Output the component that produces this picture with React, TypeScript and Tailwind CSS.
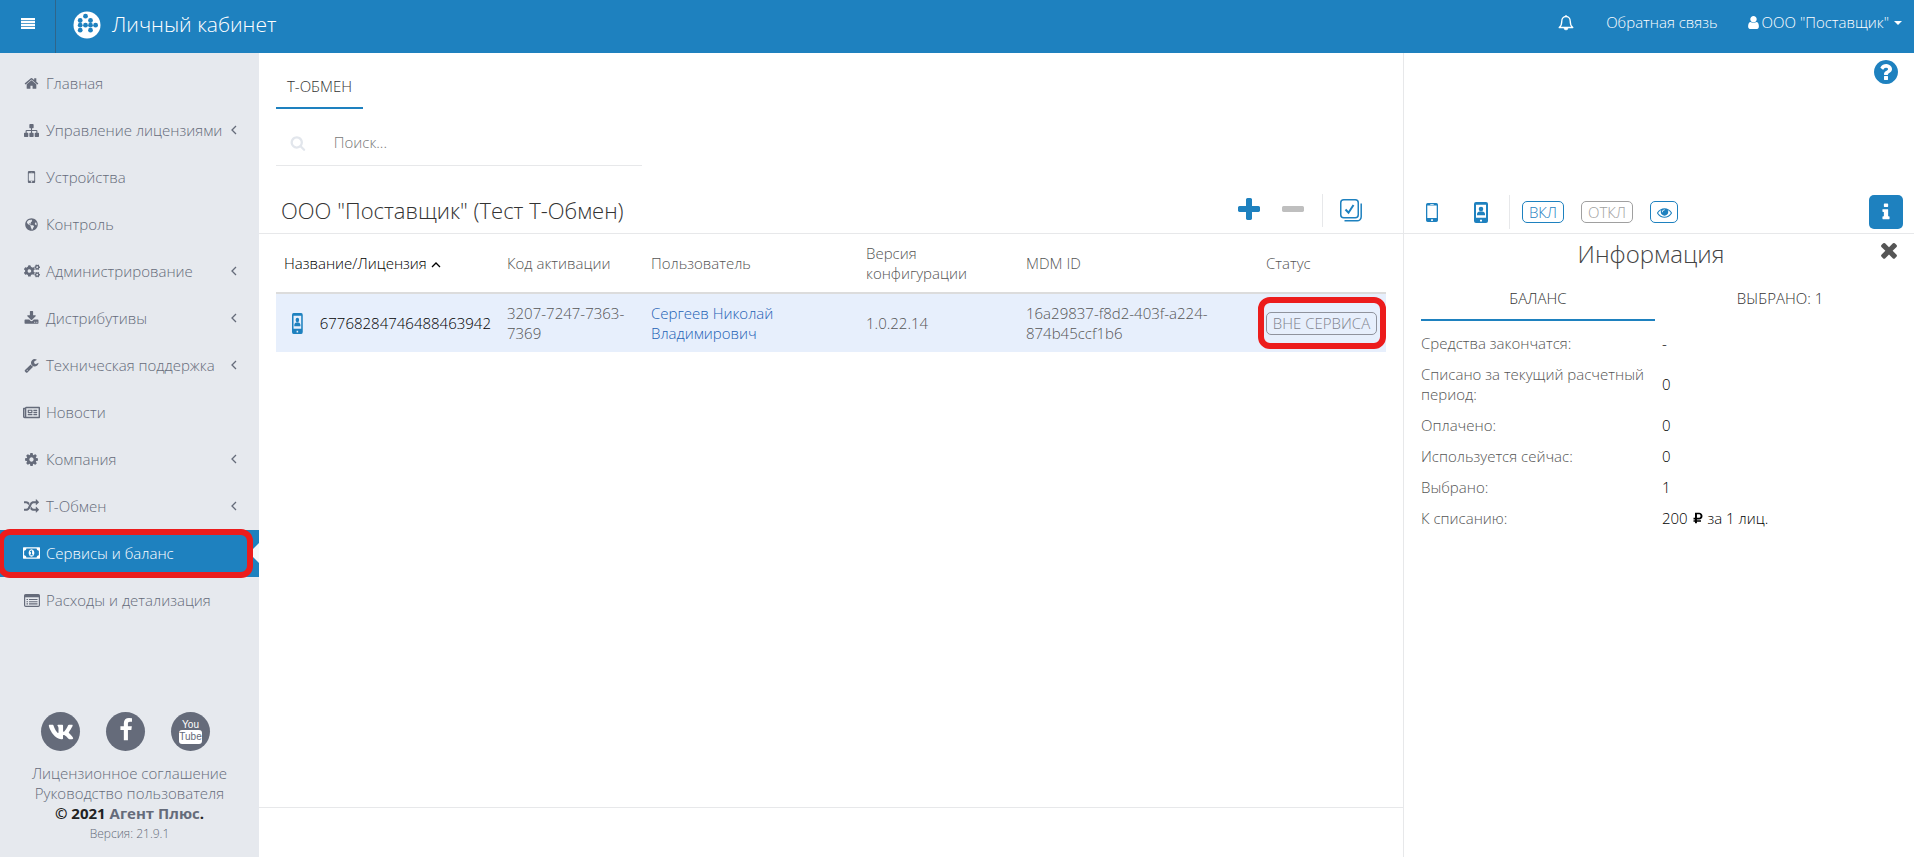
import { useState } from 'react'
import type { ReactNode } from 'react'
import { FaCogs, FaGlobeAmericas, FaRegNewspaper, FaRubleSign, FaVk } from 'react-icons/fa'

const icons = {
  home: 'M1472 992v480q0 26-19 45t-45 19h-384v-384h-256v384h-384q-26 0-45-19t-19-45v-480q0-1 .5-3t.5-3l575-474 575 474q1 2 1 6zm223-69l-62 74q-8 9-21 11h-3q-13 0-21-7l-692-577-692 577q-12 8-24 7-13-2-21-11l-62-74q-8-10-7-23.5t11-21.5l719-599q32-26 76-26t76 26l244 204v-195q0-14 9-23t23-9h192q14 0 23 9t9 23v408l219 182q10 8 11 21.5t-7 23.5z',
  sitemap: 'M1792 1248v320q0 40-28 68t-68 28h-320q-40 0-68-28t-28-68v-320q0-40 28-68t68-28h96v-192h-512v192h96q40 0 68 28t28 68v320q0 40-28 68t-68 28h-320q-40 0-68-28t-28-68v-320q0-40 28-68t68-28h96v-192h-512v192h96q40 0 68 28t28 68v320q0 40-28 68t-68 28h-320q-40 0-68-28t-28-68v-320q0-40 28-68t68-28h96v-192q0-52 38-90t90-38h512v-192h-96q-40 0-68-28t-28-68v-320q0-40 28-68t68-28h320q40 0 68 28t28 68v320q0 40-28 68t-68 28h-96v192h512q52 0 90 38t38 90v192h96q40 0 68 28t28 68z',
  mobile: 'M976 1408q0-33-23.5-56.5t-56.5-23.5-56.5 23.5-23.5 56.5 23.5 56.5 56.5 23.5 56.5-23.5 23.5-56.5zm208-160v-704q0-13-9.5-22.5t-22.5-9.5h-512q-13 0-22.5 9.5t-9.5 22.5v704q0 13 9.5 22.5t22.5 9.5h512q13 0 22.5-9.5t9.5-22.5zm-192-848q0-16-16-16h-160q-16 0-16 16t16 16h160q16 0 16-16zm288-16v1024q0 52-38 90t-90 38h-512q-52 0-90-38t-38-90v-1024q0-52 38-90t90-38h512q52 0 90 38t38 90z',
  download: 'M1344 1344q0-26-19-45t-45-19-45 19-19 45 19 45 45 19 45-19 19-45zm256 0q0-26-19-45t-45-19-45 19-19 45 19 45 45 19 45-19 19-45zm128-224v320q0 40-28 68t-68 28h-1472q-40 0-68-28t-28-68v-320q0-40 28-68t68-28h465l135 136q58 56 136 56t136-56l136-136h464q40 0 68 28t28 68zm-325-569q17 41-14 70l-448 448q-18 19-45 19t-45-19l-448-448q-31-29-14-70 17-39 59-39h256v-448q0-26 19-45t45-19h256q26 0 45 19t19 45v448h256q42 0 59 39z',
  wrench: 'M448 1472q0-26-19-45t-45-19-45 19-19 45 19 45 45 19 45-19 19-45zm644-420l-682 682q-37 37-90 37-52 0-91-37l-106-108q-38-36-38-90 0-53 38-91l681-681q39 98 114.5 173.5t173.5 114.5zm634-435q0 39-23 106-47 134-164.5 217.5t-258.5 83.5q-185 0-316.5-131.5t-131.5-316.5 131.5-316.5 316.5-131.5q58 0 121.5 16.5t107.5 46.5q16 11 16 28t-16 28l-293 169v224l193 107q5-3 79-48.5t135.5-81 70.5-35.5q15 0 23.5 10t8.5 25z',
  cog: 'M1152 896q0-106-75-181t-181-75-181 75-75 181 75 181 181 75 181-75 75-181zm512-109v222q0 12-8 23t-20 13l-185 28q-19 54-39 91 35 50 107 138 10 12 10 25t-9 23q-27 37-99 108t-94 71q-12 0-26-9l-138-108q-44 23-91 38-16 136-29 186-7 28-36 28h-222q-14 0-24.5-8.5t-11.5-21.5l-28-184q-49-16-90-37l-141 107q-10 9-25 9-14 0-25-11-126-114-165-168-7-10-7-23 0-12 8-23 15-21 51-66.5t54-70.5q-27-50-41-99l-183-27q-13-2-21-12.5t-8-23.5v-222q0-12 8-23t19-13l186-28q14-46 39-92-40-57-107-138-10-12-10-24 0-10 9-23 26-36 98.5-107.5t94.5-71.5q13 0 26 10l138 107q44-23 91-38 16-136 29-186 7-28 36-28h222q14 0 24.5 8.5t11.5 21.5l28 184q49 16 90 37l142-107q9-9 24-9 13 0 25 10 129 119 165 170 7 8 7 22 0 12-8 23-15 21-51 66.5t-54 70.5q26 50 41 98l183 28q13 2 21 12.5t8 23.5z',
  random: 'M666 481q-60 92-137 273-22-45-37-72.5t-40.5-63.5-51-56.5-63-35-81.5-14.5h-224q-14 0-23-9t-9-23v-192q0-14 9-23t23-9h224q250 0 410 225zm1126 799q0 14-9 23l-320 320q-9 9-23 9-13 0-22.5-9.5t-9.5-22.5v-192q-32 0-85 .5t-81 1-73-1-71-5-64-10.5-63-18.5-58-28.5-59-40-55-53.5-56-69.5q59-93 136-273 22 45 37 72.5t40.5 63.5 51 56.5 63 35 81.5 14.5h256v-192q0-14 9-23t23-9q12 0 24 10l319 319q9 9 9 23zm0-896q0 14-9 23l-320 320q-9 9-23 9-13 0-22.5-9.5t-9.5-22.5v-192h-256q-48 0-87 15t-69 45-51 61.5-45 77.5q-32 62-78 171-29 66-49.5 111t-54 105-64 100-74 83-90 68.5-106.5 42-128 16.5h-224q-14 0-23-9t-9-23v-192q0-14 9-23t23-9h224q48 0 87-15t69-45 51-61.5 45-77.5q32-62 78-171 29-66 49.5-111t54-105 64-100 74-83 90-68.5 106.5-42 128-16.5h256v-192q0-14 9-23t23-9q12 0 24 10l319 319q9 9 9 23z',
  money: 'M768 1152h384v-96h-128v-448h-114l-148 137 77 80q42-37 55-57h2v288h-128v96zm512-256q0 70-21 142t-59.5 134-101.5 101-138 39-138-39-101.5-101-59.5-134-21-142 21-142 59.5-134 101.5-101 138-39 138 39 101.5 101 59.5 134 21 142zm512 256v-512q-106 0-181-75t-75-181h-1152q0 106-75 181t-181 75v512q106 0 181 75t75 181h1152q0-106 75-181t181-75zm128-832v1152q0 26-19 45t-45 19h-1792q-26 0-45-19t-19-45v-1152q0-26 19-45t45-19h1792q26 0 45 19t19 45z',
  user: 'M1536 1399q0 109-62.5 187t-150.5 78h-854q-88 0-150.5-78t-62.5-187q0-85 8.5-160.5t31.5-152 58.5-131 94-89 134.5-34.5q131 128 313 128t313-128q76 0 134.5 34.5t94 89 58.5 131 31.5 152 8.5 160.5zm-256-887q0 159-112.5 271.5t-271.5 112.5-271.5-112.5-112.5-271.5 112.5-271.5 271.5-112.5 271.5 112.5 112.5 271.5z',
  search: 'M1216 832q0-185-131.5-316.5t-316.5-131.5-316.5 131.5-131.5 316.5 131.5 316.5 316.5 131.5 316.5-131.5 131.5-316.5zm512 832q0 52-38 90t-90 38q-54 0-90-38l-343-342q-179 124-399 124-143 0-273.5-55.5t-225-150-150-225-55.5-273.5 55.5-273.5 150-225 225-150 273.5-55.5 273.5 55.5 225 150 150 225 55.5 273.5q0 220-124 399l343 343q37 37 37 90z',
  plus: 'M1600 736v192q0 40-28 68t-68 28h-416v416q0 40-28 68t-68 28h-192q-40 0-68-28t-28-68v-416h-416q-40 0-68-28t-28-68v-192q0-40 28-68t68-28h416v-416q0-40 28-68t68-28h192q40 0 68 28t28 68v416h416q40 0 68 28t28 68z',
  minus: 'M1600 736v192q0 40-28 68t-68 28h-1216q-40 0-68-28t-28-68v-192q0-40 28-68t68-28h1216q40 0 68 28t28 68z',
  times: 'M1490 1322q0 40-28 68l-136 136q-28 28-68 28t-68-28l-294-294-294 294q-28 28-68 28t-68-28l-136-136q-28-28-28-68t28-68l294-294-294-294q-28-28-28-68t28-68l136-136q28-28 68-28t68 28l294 294 294-294q28-28 68-28t68 28l136 136q28 28 28 68t-28 68l-294 294 294 294q28 28 28 68z',
  question: 'M1024 1376v-192q0-14-9-23t-23-9h-192q-14 0-23 9t-9 23v192q0 14 9 23t23 9h192q14 0 23-9t9-23zm256-672q0-88-55.5-163t-138.5-116-170-41q-243 0-371 213-15 24 8 42l132 100q7 6 19 6 16 0 25-12 53-68 86-92 34-24 86-24 48 0 85.5 26t37.5 59q0 38-20 61t-68 45q-63 28-115.5 86.5t-52.5 125.5v36q0 14 9 23t23 9h192q14 0 23-9t9-23q0-19 21.5-49.5t54.5-49.5q32-18 49-28.5t46-35 44.5-48 28-60.5 12.5-81zm384 192q0 209-103 385.5t-279.5 279.5-385.5 103-385.5-103-279.5-279.5-103-385.5 103-385.5 279.5-279.5 385.5-103 385.5 103 279.5 279.5 103 385.5z',
  info: 'M1216 1344v128q0 26-19 45t-45 19h-512q-26 0-45-19t-19-45v-128q0-26 19-45t45-19h64v-384h-64q-26 0-45-19t-19-45v-128q0-26 19-45t45-19h384q26 0 45 19t19 45v576h64q26 0 45 19t19 45zm-128-1152v192q0 26-19 45t-45 19h-256q-26 0-45-19t-19-45v-192q0-26 19-45t45-19h256q26 0 45 19t19 45z',
  eye: 'M1664 960q-152-236-381-353 61 104 61 225 0 185-131.5 316.5t-316.5 131.5-316.5-131.5-131.5-316.5q0-121 61-225-229 117-381 353 133 205 333.5 326.5t434.5 121.5 434.5-121.5 333.5-326.5zm-720-384q0-20-14-34t-34-14q-125 0-214.5 89.5t-89.5 214.5q0 20 14 34t34 14 34-14 14-34q0-86 61-147t147-61q20 0 34-14t14-34zm848 384q0 34-20 69-140 230-376.5 368.5t-499.5 138.5-499.5-139-376.5-368q-20-35-20-69t20-69q140-229 376.5-368t499.5-139 499.5 139 376.5 368q20 35 20 69z',
  facebook: 'M1343 12v264h-157q-86 0-116 36t-30 108v189h293l-39 296h-254v759h-306v-759h-255v-296h255v-218q0-186 104-288.5t277-102.5q147 0 228 12z',
}

function Icon({ name, className }: { name: keyof typeof icons; className?: string }) {
  return (
    <svg viewBox={name === 'money' ? '0 0 1920 1792' : '0 0 1792 1792'} fill="currentColor" className={className} aria-hidden="true">
      <path d={icons[name]} />
    </svg>
  )
}

function Logo() {
  const dots = [
    [12.5, 5.2], [7.2, 9.5], [17.5, 9.5],
    [7.2, 14.2], [12.5, 14.2], [17.5, 14.2], [22.6, 14.2],
    [7.2, 19.2], [17.5, 19.2],
  ]
  return (
    <svg viewBox="0 0 28 28" className="size-7" aria-hidden="true">
      <circle cx="14" cy="14" r="13.5" fill="#fff" />
      {dots.map(([x, y]) => (
        <circle key={`${x}-${y}`} cx={x} cy={y} r="2.4" fill="#1e81bf" />
      ))}
    </svg>
  )
}

function BellIcon() {
  return (
    <svg viewBox="0 0 16 17" className="h-[17px] w-4" fill="none" stroke="currentColor" strokeWidth="1.300" aria-hidden="true">
      <path d="M8 1v1.500M8 2.500c-2.800 0-4.200 2-4.200 4.500 0 3.500-1 5.300-2.600 6.500h13.600C13.200 12.300 12.200 10.500 12.200 7c0-2.500-1.400-4.500-4.200-4.500z" strokeLinejoin="round" />
      <path d="M6 14a2 2 0 0 0 4 0z" fill="currentColor" strokeWidth=".5" />
    </svg>
  )
}

function ListIcon() {
  return (
    <svg viewBox="0 0 16 13" className="h-[13px] w-4" fill="none" stroke="currentColor" aria-hidden="true">
      <rect x=".6" y=".6" width="14.800" height="11.800" rx="1.200" strokeWidth="1.200" />
      <path d="M.6 2h14.800" strokeWidth="2.600" />
      <path d="M2.500 5.500H4M5 5.500h8.500M2.500 7.700H4M5 7.700h8.500M2.500 9.900H4M5 9.900h8.500" strokeWidth="1.100" />
    </svg>
  )
}

function PhoneIcon({ person = false, className }: { person?: boolean; className: string }) {
  return (
    <svg viewBox="0 0 14 22" preserveAspectRatio="none" className={className} fill="#1e81bf" aria-hidden="true">
      {person ? (
        <>
          <path fillRule="evenodd" d="M2 0h10a2 2 0 0 1 2 2v18a2 2 0 0 1-2 2H2a2 2 0 0 1-2-2V2a2 2 0 0 1 2-2zm0 3v13.500h10V3zm4 15.500v2h2v-2z" />
          <path d="M7 5a2.300 2.300 0 1 1 0 4.600A2.300 2.300 0 0 1 7 5zM3 14v-1.500c0-1.500 1.500-2.500 2.500-2.500h3c1 0 2.500 1 2.500 2.500V14z" />
        </>
      ) : (
        <path fillRule="evenodd" d="M2 0h10a2 2 0 0 1 2 2v18a2 2 0 0 1-2 2H2a2 2 0 0 1-2-2V2a2 2 0 0 1 2-2zM1.500 3v14.500h11V3zM6 18.700v2h2v-2zM5 1.200v.7h4v-.7z" />
      )}
    </svg>
  )
}

function Chevron({ className }: { className?: string }) {
  return (
    <svg viewBox="0 0 6 10" className={className} fill="none" stroke="currentColor" strokeWidth="1.300" aria-hidden="true">
      <path d="M5 1 1 5l4 4" />
    </svg>
  )
}

interface MenuItem {
  label: string
  icon: ReactNode
  nested?: boolean
  active?: boolean
}

const menu: MenuItem[] = [
  { label: 'Главная', icon: <Icon name="home" className="size-[15px]" /> },
  { label: 'Управление лицензиями', icon: <Icon name="sitemap" className="size-[15px]" />, nested: true },
  { label: 'Устройства', icon: <Icon name="mobile" className="size-5" /> },
  { label: 'Контроль', icon: <FaGlobeAmericas className="size-[13px]" /> },
  { label: 'Администрирование', icon: <FaCogs className="size-4" />, nested: true },
  { label: 'Дистрибутивы', icon: <Icon name="download" className="size-[15px]" />, nested: true },
  { label: 'Техническая поддержка', icon: <Icon name="wrench" className="size-[15px]" />, nested: true },
  { label: 'Новости', icon: <FaRegNewspaper className="size-[17px]" /> },
  { label: 'Компания', icon: <Icon name="cog" className="size-[15px]" />, nested: true },
  { label: 'Т-Обмен', icon: <Icon name="random" className="size-[15px]" />, nested: true },
  { label: 'Сервисы и баланс', icon: <Icon name="money" className="h-4 w-[17px]" />, active: true },
  { label: 'Расходы и детализация', icon: <ListIcon /> },
]

const balance: { label: string; value: ReactNode }[] = [
  { label: 'Средства закончатся:', value: '-' },
  { label: 'Списано за текущий расчетный период:', value: '0' },
  { label: 'Оплачено:', value: '0' },
  { label: 'Используется сейчас:', value: '0' },
  { label: 'Выбрано:', value: '1' },
  {
    label: 'К списанию:',
    value: (
      <>
        200 <FaRubleSign className="inline size-3 align-baseline" /> за 1 лиц.
      </>
    ),
  },
]

function Header() {
  return (
    <header className="flex h-[53px] shrink-0 items-stretch bg-[#1e81bf] text-white">
      <button aria-label="Меню" className="flex w-14 items-center justify-center border-r border-[#2f658a] pb-1.5">
        <svg viewBox="0 0 14 11" className="h-[11px] w-[14px]" fill="currentColor" aria-hidden="true">
          <path d="M0 0h14v2.200H0zM0 3h14v2.200H0zM0 6h14v2.200H0zM0 8.900h14v2.100H0z" />
        </svg>
      </button>
      <a href="#" className="flex items-center gap-[11px] pb-1 pl-[17px] text-[21px] font-light">
        <Logo />
        Личный кабинет
      </a>
      <nav className="ml-auto flex items-center pr-3 pb-2 text-[15px] font-light">
        <button aria-label="Уведомления">
          <BellIcon />
        </button>
        <a href="#" className="ml-8">Обратная связь</a>
        <button className="ml-7 flex items-center gap-px">
          <Icon name="user" className="size-[15px]" />
          ООО "Поставщик"
          <span className="ml-1 border-x-4 border-t-4 border-x-transparent border-t-white" />
        </button>
      </nav>
    </header>
  )
}

function Sidebar() {
  return (
    <aside className="flex w-[259px] shrink-0 flex-col bg-[#e6e9ee] text-[#656b7a]">
      <ul className="pt-[7px] text-[15px] font-light">
        {menu.map((item) => (
          <li key={item.label} className="relative">
            <a
              href="#"
              className={
                item.active
                  ? 'flex h-[47px] items-center bg-[#1e81bf] pr-[22px] pb-px pl-[23px] text-white'
                  : 'flex h-[47px] items-center pr-[22px] pb-px pl-[23px]'
              }
            >
              <span className="mr-1.5 flex w-[17px] justify-center">{item.icon}</span>
              {item.label}
              {item.nested && <Chevron className="ml-auto h-2.5 w-1.5" />}
            </a>
            {item.active && (
              <>
                <span className="absolute top-[13px] right-0 border-y-[10px] border-r-[10px] border-y-transparent border-r-[#f5f6f8]" />
                <span className="absolute -inset-y-px right-1.5 -left-0.5 rounded-xl border-6 border-[#ec1c1c]" />
              </>
            )}
          </li>
        ))}
      </ul>

      <div className="mt-auto pb-3 text-center text-[15px] leading-5 font-light">
        <div className="mb-3 flex justify-center gap-[26px] pr-2">
          <a href="#" aria-label="ВКонтакте" className="flex size-[39px] items-center justify-center rounded-full bg-[#656b7a] text-white">
            <FaVk className="size-[26px]" />
          </a>
          <a href="#" aria-label="Facebook" className="flex size-[39px] items-center justify-center rounded-full bg-[#656b7a] pb-1 text-white">
            <Icon name="facebook" className="size-6" />
          </a>
          <a
            href="#"
            className="flex size-[39px] flex-col items-center justify-center rounded-full bg-[#656b7a] font-['Liberation_Sans_Narrow','Liberation_Sans',sans-serif] text-[10px] leading-[10px] font-normal text-white"
          >
            <span>You</span>
            <span className="rounded-[3px] bg-white py-0.5 text-[#656b7a]">Tube</span>
          </a>
        </div>
        <a href="#" className="block">Лицензионное соглашение</a>
        <a href="#" className="block">Руководство пользователя</a>
        <p className="font-bold text-[#222]">
          © 2021 <a href="#" className="text-[#656b7a]">Агент Плюс</a>.
        </p>
        <p className="text-xs leading-[22px]">Версия: 21.9.1</p>
      </div>
    </aside>
  )
}

function Licenses() {
  const [search, setSearch] = useState('')

  return (
    <main className="flex min-w-0 flex-1 flex-col">
      <div className="px-[17px]">
        <button className="mt-[13px] h-[43px] w-[87px] border-b-2 border-[#1e81bf] text-[15px] font-light text-[#333]">Т-ОБМЕН</button>
        <label className="mt-3 flex h-[45px] w-[33%] items-center border-b border-[#e7e8ea] pl-3.5">
          <Icon name="search" className="size-[18px] text-[#e2e6ec]" />
          <input
            type="text"
            value={search}
            onChange={(e) => setSearch(e.target.value)}
            placeholder="Поиск..."
            aria-label="Поиск"
            className="ml-7 w-full pb-0.5 text-[15px] font-light outline-none placeholder:text-[#777]"
          />
        </label>
      </div>

      <div className="flex h-[68px] items-end border-b border-[#e7e8ea] pr-[41px] pb-1.5 pl-[22px]">
        <h1 className="flex h-[34px] items-center text-[22px] font-light text-[#333]">ООО "Поставщик" (Тест Т-Обмен)</h1>
        <div className="ml-auto flex h-[34px] items-center">
          <button aria-label="Добавить" className="text-[#1e81bf]">
            <Icon name="plus" className="size-[28px]" />
          </button>
          <button aria-label="Удалить" className="ml-4 text-[#bfbfbf]">
            <Icon name="minus" className="size-[28px]" />
          </button>
          <span className="mr-[17px] ml-[15px] h-[33px] w-px bg-[#e7e8ea]" />
          <button aria-label="Выбрать все">
            <svg viewBox="0 0 22 23" className="h-[23px] w-[22px]" fill="none" stroke="#1e81bf" strokeWidth="1.500" aria-hidden="true">
              <rect x=".75" y=".75" width="17.500" height="18" rx="3" />
              <path d="M4.500 21.800H17a4 4 0 0 0 4.200-4V4.500" />
              <path d="m5.500 10.500 3 3.200L13.500 6" strokeWidth="2" />
            </svg>
          </button>
        </div>
      </div>

      <div className="px-[17px]">
        <table className="w-full table-fixed text-left text-[15px] leading-5 font-light text-[#555]">
          <colgroup>
            <col />
            <col className="w-36" />
            <col className="w-[215px]" />
            <col className="w-40" />
            <col className="w-60" />
            <col className="w-32" />
          </colgroup>
          <thead>
            <tr className="h-[59px] border-b-2 border-[#dcdcdc]">
              <th className="px-2 font-light text-black">
                Название/Лицензия <Chevron className="ml-0.5 inline h-2.5 w-1.5 rotate-90" />
              </th>
              <th className="px-2 font-light">Код активации</th>
              <th className="px-2 font-light">Пользователь</th>
              <th className="px-2 font-light">Версия конфигурации</th>
              <th className="px-2 font-light">MDM ID</th>
              <th className="px-2 font-light">Статус</th>
            </tr>
          </thead>
          <tbody>
            <tr className="h-[59px] bg-[#e7effc]">
              <td className="px-2 text-black">
                <span className="flex items-center gap-[17px] pl-2">
                  <PhoneIcon person className="h-[21px] w-3" />
                  67768284746488463942
                </span>
              </td>
              <td className="px-2">3207-7247-7363-7369</td>
              <td className="px-2">
                <a href="#" className="text-[#2361b5]">Сергеев Николай Владимирович</a>
              </td>
              <td className="px-2">1.0.22.14</td>
              <td className="px-2">16a29837-f8d2-403f-a224-874b45ccf1b6</td>
              <td className="relative px-2">
                <span className="flex h-[23px] w-[111px] items-center justify-center rounded-[5px] border border-[#8f939d] whitespace-nowrap text-[#7f838d]">
                  ВНЕ СЕРВИСА
                </span>
                <span className="absolute inset-x-0 inset-y-[3px] rounded-xl border-6 border-[#ec1c1c]" />
              </td>
            </tr>
          </tbody>
        </table>
      </div>

      <footer className="mt-auto h-[50px] border-t border-[#e7e8ea]" />
    </main>
  )
}

function InfoPanel() {
  return (
    <section className="flex w-[511px] shrink-0 flex-col border-l border-[#e7e8ea]">
      <div className="flex h-[134px] justify-end pt-[5px] pr-3.5">
        <button aria-label="Справка" className="h-fit text-[#1e81bf]">
          <Icon name="question" className="size-7" />
        </button>
      </div>
      <div className="flex h-[47px] items-end border-b border-[#e7e8ea] pr-[11px] pb-1 pl-[22px] text-[15px] font-light">
        <div className="flex h-[34px] flex-1 items-center">
          <button aria-label="Устройство">
            <PhoneIcon className="h-[19px] w-3" />
          </button>
          <button aria-label="Пользователь устройства" className="ml-9">
            <PhoneIcon person className="h-[21px] w-3.5" />
          </button>
          <span className="mr-3 ml-[21px] h-[34px] w-px bg-[#e7e8ea]" />
          <button className="h-[22px] w-[42px] rounded-[5px] border border-[#1e81bf] leading-5 text-[#1e81bf]">ВКЛ</button>
          <button className="ml-[17px] h-[22px] w-[52px] rounded-[5px] border border-[#a0a0a0] leading-5 text-[#a0a0a0]">ОТКЛ</button>
          <button aria-label="Показать" className="ml-[17px] flex h-[22px] w-7 items-center justify-center rounded-[5px] border border-[#1e81bf] text-[#1e81bf]">
            <Icon name="eye" className="size-[15px]" />
          </button>
          <button aria-label="Информация" className="ml-auto flex size-[34px] items-center justify-center rounded-[5px] bg-[#1e81bf] text-white">
            <Icon name="info" className="size-5" />
          </button>
        </div>
      </div>

      <div className="px-[17px]">
        <div className="relative flex h-11 items-center justify-center pr-4 pb-1">
          <h2 className="text-2xl font-light text-[#444]">Информация</h2>
          <button aria-label="Закрыть" className="absolute top-1 -right-1 text-[#555]">
            <Icon name="times" className="size-6" />
          </button>
        </div>
        <div className="grid grid-cols-2 gap-2 text-[15px] font-light text-[#333]">
          <button className="h-[43px] border-b-2 border-[#1e81bf]">БАЛАНС</button>
          <button className="h-[43px] border-b-2 border-transparent">ВЫБРАНО: 1</button>
        </div>
        <dl className="mt-3 leading-5">
          {balance.map((row) => (
            <div key={row.label} className="mb-[11px] flex items-center">
              <dt className="w-[241px] shrink-0 text-[15px] font-light text-[#555]">{row.label}</dt>
              <dd className="text-[15px] font-light text-black">{row.value}</dd>
            </div>
          ))}
        </dl>
      </div>
    </section>
  )
}

export default function App() {
  return (
    <div className="flex min-h-screen flex-col bg-white font-['Open_Sans',sans-serif]">
      <Header />
      <div className="flex flex-1">
        <Sidebar />
        <Licenses />
        <InfoPanel />
      </div>
    </div>
  )
}
